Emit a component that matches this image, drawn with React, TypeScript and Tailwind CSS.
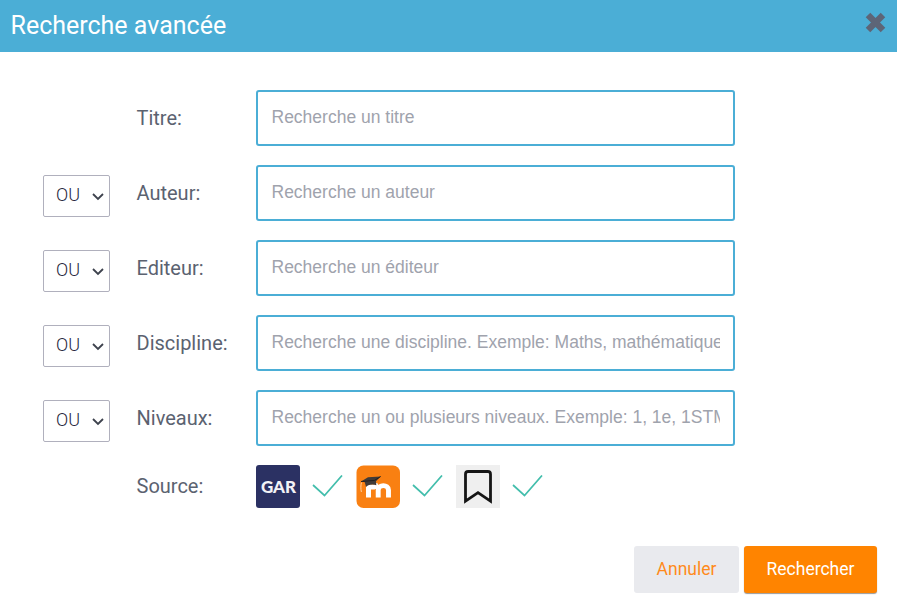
import React from 'react';

type Field = { label: string; placeholder: string; operator: boolean };

const fields: Field[] = [
  { label: 'Titre:', placeholder: 'Recherche un titre', operator: false },
  { label: 'Auteur:', placeholder: 'Recherche un auteur', operator: true },
  { label: 'Editeur:', placeholder: 'Recherche un éditeur', operator: true },
  { label: 'Discipline:', placeholder: 'Recherche une discipline. Exemple: Maths, mathématiques', operator: true },
  { label: 'Niveaux:', placeholder: 'Recherche un ou plusieurs niveaux. Exemple: 1, 1e, 1STMG', operator: true },
];

function Operator() {
  return (
    <button className="mt-[10px] flex h-[42px] w-[67px] items-center rounded-[2px] border border-[#b0b0bd] bg-white pb-[3px] pl-3 text-[18px] font-light text-[#25253b]">
      <span className="w-[36px] text-left">OU</span>
      <svg width="12" height="8" viewBox="0 0 12 8" className="mt-[4px]" fill="none" stroke="#3d424d" strokeWidth="1.8">
        <path d="M1 1l5 5 5-5" />
      </svg>
    </button>
  );
}

function FieldRow({ label, placeholder, operator }: Field) {
  return (
    <div className="flex h-[75px] items-start">
      <div className="w-[93.5px] shrink-0">{operator && <Operator />}</div>
      <label className="w-[119.5px] shrink-0 pt-[13px] text-[20px] leading-[30px] text-[#5b6270]">{label}</label>
      <input
        className="h-[56px] w-[479px] rounded-[3px] border-2 border-[#4baed6] bg-white px-[13.5px] pb-[2px] font-['Liberation_Sans',Arial,sans-serif] text-[17.5px] outline-none placeholder:text-[#9fa3ad] placeholder:opacity-100"
        placeholder={placeholder}
      />
    </div>
  );
}

function Check() {
  return (
    <svg width="32" height="24" viewBox="0 0 32 24" fill="none" stroke="#43beac" strokeWidth="1.7">
      <path d="M1 10L12.5 20.5L30 .5" />
    </svg>
  );
}

function GarLogo() {
  return (
    <div className="flex h-[43px] w-[44px] items-center justify-center rounded-[3px] bg-[#2b3163] pl-px font-['Lato',sans-serif] text-[17px] font-black text-[#f2f2f6]">
      GAR
    </div>
  );
}

function MoodleLogo() {
  return (
    <svg width="44" height="43" viewBox="0 0 44 43">
      <rect x=".5" y=".5" width="43.5" height="42.5" rx="7" fill="#f98012" />
      <path d="M12.5 32.5V19.5" fill="none" stroke="#fff" strokeWidth="5" />
      <path d="M12.5 22H18L22.2 20M22.2 32.5V25c0-5.8 10.3-5.8 10.3 0V32.5" fill="none" stroke="#fff" strokeWidth="4.9" />
      <path d="M5.4 17.5c-.7 3-.7 6.5 0 9.5" fill="none" stroke="#ffd0a0" strokeWidth="1" />
      <path d="M5 16.5L12 12.3L24.7 11.5L20 16.2L20.3 20.3C16.5 19 13 19.4 10 22L8.8 17.3Z" fill="#413b38" />
      <path d="M5 16.5L18.5 15.4L24.7 11.5" fill="none" stroke="#25211f" strokeWidth="1" />
    </svg>
  );
}

function BookmarkLogo() {
  return (
    <svg width="44" height="43" viewBox="0 0 44 43">
      <rect width="44" height="43" fill="#efefef" />
      <path d="M9.5 36.2V9.2Q9.5 6.5 12.2 6.5H31.8Q34.5 6.5 34.5 9.2V36.2L22 27.7Z" fill="none" stroke="#151515" strokeWidth="2.8" />
    </svg>
  );
}

export default function App() {
  return (
    <div className="flex h-[614px] w-[897px] flex-col overflow-hidden bg-white font-['Roboto',sans-serif]">
      <header className="flex h-[52px] items-start justify-between bg-[#4baed6] pl-[10.5px] pr-[11px]">
        <h1 className="pt-[8px] text-[25px] leading-[36px] text-white">Recherche avancée</h1>
        <button aria-label="Fermer" className="mt-[12px]">
          <svg width="21" height="21" viewBox="0 0 21 21" fill="none" stroke="#5d6577" strokeWidth="6.4" strokeLinejoin="round">
            <path d="M3 3L18 18M18 3L3 18" />
          </svg>
        </button>
      </header>
      <main className="pl-[43px] pt-[38px]">
        {fields.map((field) => (
          <FieldRow key={field.label} {...field} />
        ))}
        <div className="flex h-[43px] items-start">
          <span className="ml-[93.5px] w-[119.5px] pt-[6px] text-[20px] leading-[30px] text-[#5b6270]">Source:</span>
          <div className="flex items-center gap-3">
            <GarLogo />
            <Check />
            <MoodleLogo />
            <Check />
            <BookmarkLogo />
            <Check />
          </div>
        </div>
      </main>
      <footer className="mt-[38px] flex justify-end gap-[5px] pr-5 text-[17.5px]">
        <button className="h-[47px] w-[105px] rounded-[3px] bg-[#e9eaee] text-[#ff8a1c]">Annuler</button>
        <button className="h-[47px] w-[133px] rounded-[3px] bg-[#ff8400] text-white shadow-[0_1px_1px_#999]">Rechercher</button>
      </footer>
    </div>
  );
}
